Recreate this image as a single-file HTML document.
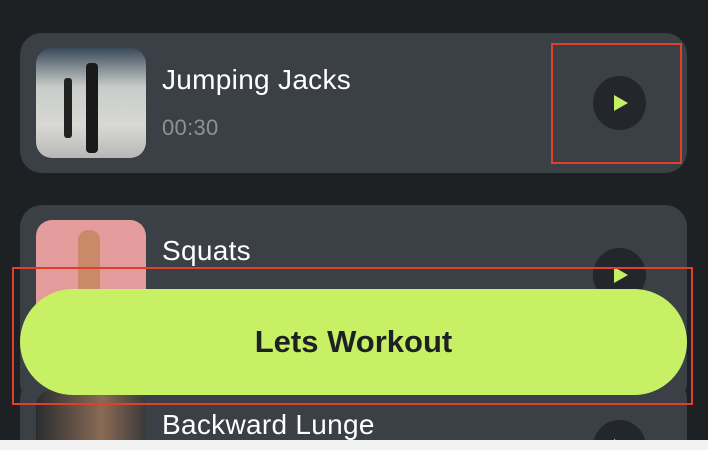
<!DOCTYPE html>
<html style="width:708px;height:450px;overflow:hidden"><head><style>
body{margin:0;width:708px;height:450px;overflow:hidden;background:#1e2124;font-family:"Liberation Sans",sans-serif;position:relative}
.card{position:absolute;left:20px;width:667px;background:#3b3f46;border-radius:22px;overflow:hidden}
.img{position:absolute;left:16px;width:110px;height:110px;border-radius:16px;overflow:hidden}
.t{position:absolute;left:142px;color:#fff;font-size:28px;letter-spacing:0.3px}
.play{position:absolute;left:573px;width:53px;height:54px;border-radius:50%;background:#23262a}
.play:after{content:"";position:absolute;left:21px;top:19px;border-left:14px solid #c5f063;border-top:8px solid transparent;border-bottom:8px solid transparent}
.red{position:absolute;border:2px solid #e0402a}
</style></head><body>
<div class="card" style="top:33px;height:140px">
 <div class="img" style="top:15px;background:linear-gradient(180deg,#3a4a5a 0%,#c8ccc8 35%,#d8d8d4 70%,#b8b8b8 100%)">
  <div style="position:absolute;left:28px;top:30px;width:8px;height:60px;background:#222;border-radius:3px"></div>
  <div style="position:absolute;left:50px;top:15px;width:12px;height:90px;background:#1a1a1a;border-radius:4px"></div>
 </div>
 <div class="t" style="top:31px">Jumping Jacks</div>
 <div class="t" style="top:82px;font-size:22px;color:#8e9196">00:30</div>
 <div class="play" style="top:43px"></div>
</div>
<div class="red" style="left:551px;top:43px;width:127px;height:117px"></div>
<div class="card" style="top:205px;height:200px">
 <div class="img" style="top:15px;background:#e49b9b">
  <div style="position:absolute;left:42px;top:10px;width:22px;height:80px;background:#c98a6a;border-radius:10px"></div>
 </div>
 <div class="t" style="top:30px">Squats</div>
 <div class="play" style="top:43px"></div>
</div>
<div class="card" style="top:377px;height:63px;border-radius:22px 22px 0 0">
 <div class="img" style="top:13px;background:linear-gradient(90deg,#2a2d30,#8a6a55 60%,#3a3a3a)"></div>
 <div class="t" style="top:32px">Backward Lunge</div>
 <div class="play" style="top:43px"></div>
</div>
<div style="position:absolute;left:20px;top:289px;width:667px;height:106px;border-radius:53px;background:#c7f064;color:#1e2124;font-weight:bold;font-size:31px;text-align:center;line-height:106px">Lets Workout</div>
<div class="red" style="left:12px;top:267px;width:677px;height:134px"></div>
<div style="position:absolute;left:0;top:440px;width:708px;height:10px;background:#f2f2f2"></div>
</body></html>
